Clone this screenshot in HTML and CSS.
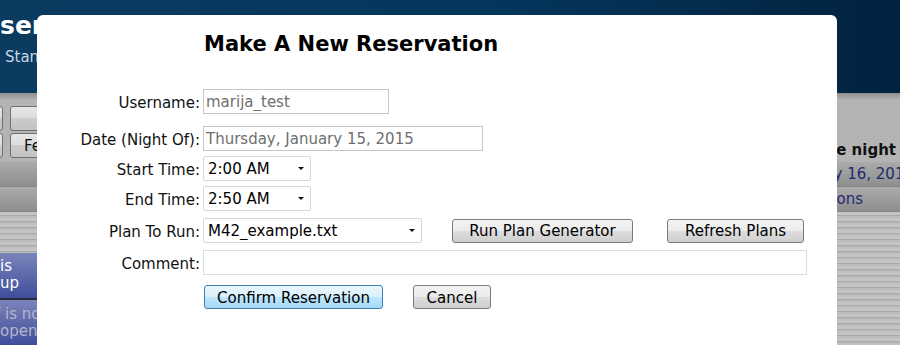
FILE: index.html
```html
<!DOCTYPE html>
<html lang="en">
<head>
    <meta charset="UTF-8">
    <meta name="viewport" content="width=device-width, initial-scale=1.0">
    <title>Make A New Reservation</title>
    <link rel="stylesheet" href="styles.css">
</head>

<body>
    <div class="page">
        <header class="site-header">
            <h1 class="site-title">servations</h1>
            <p class="site-sub">Stanford</p>
        </header>
        <main class="page-main">
            <aside class="side-left">
                <div class="side-top">
                    <div class="tool-row">
                        <button class="tool tool-cut"></button>
                        <button class="tool"></button>
                    </div>
                    <div class="tool-row">
                        <button class="tool tool-cut"></button>
                        <button class="tool">Fetch</button>
                    </div>
                </div>
                <div class="bar"></div>
                <div class="bar"></div>
                <div class="stripes stripes-short"></div>
                <div class="notice">is<br>up</div>
                <div class="notice notice-muted">f is not<br>open</div>
            </aside>
            <div class="center"></div>
            <aside class="side-right">
                <div class="side-top side-top-right">
                    <h2 class="night-title">the night</h2>
                </div>
                <div class="bar bar-text"><span class="night-date">January 16, 2015</span></div>
                <div class="bar bar-text"><span class="night-link">Reservations</span></div>
                <div class="stripes"></div>
            </aside>
        </main>
    </div>

    <div class="modal">
        <h2 class="modal-title">Make A New Reservation</h2>
        <form class="res-form">
            <div class="row row-first">
                <label class="row-label" for="username">Username:</label>
                <input type="text" id="username" class="field field-user" value="marija_test" disabled>
            </div>
            <div class="row row-gap-lg">
                <label class="row-label" for="night">Date (Night Of):</label>
                <input type="text" id="night" class="field field-date" value="Thursday, January 15, 2015" disabled>
            </div>
            <div class="row">
                <label class="row-label" for="start">Start Time:</label>
                <span class="select-wrap select-time">
                    <select id="start" class="select">
                        <option>2:00 AM</option>
                    </select>
                </span>
            </div>
            <div class="row">
                <label class="row-label" for="end">End Time:</label>
                <span class="select-wrap select-time">
                    <select id="end" class="select">
                        <option>2:50 AM</option>
                    </select>
                </span>
            </div>
            <div class="row row-gap-md">
                <label class="row-label" for="plan">Plan To Run:</label>
                <span class="select-wrap select-plan">
                    <select id="plan" class="select">
                        <option>M42_example.txt</option>
                    </select>
                </span>
                <button type="button" class="btn btn-generator">Run Plan Generator</button>
                <button type="button" class="btn btn-refresh">Refresh Plans</button>
            </div>
            <div class="row row-gap-md">
                <label class="row-label" for="comment">Comment:</label>
                <input type="text" id="comment" class="field field-comment">
            </div>
            <div class="row row-actions">
                <span class="row-label"></span>
                <button type="button" class="btn btn-confirm">Confirm Reservation</button>
                <button type="button" class="btn btn-cancel">Cancel</button>
            </div>
        </form>
    </div>
</body>
</html>
```

FILE: styles.css
```css
/* General Reset */
* {
    margin: 0;
    padding: 0;
    box-sizing: border-box;
}

body {
    font-family: "DejaVu Sans", Verdana, sans-serif;
    background-color: #b4b4b4;
    color: #111;
    width: 900px;
    height: 345px;
    overflow: hidden;
}

/* Background page */
.site-header {
    height: 93px;
    background: linear-gradient(to right, #0c3b60, #04365c 55%, #01223f);
    color: #fff;
    padding-top: 11px;
}

.site-title {
    font-size: 25px;
    font-weight: bold;
    line-height: 30px;
    white-space: nowrap;
}

.site-sub {
    font-size: 15px;
    line-height: 18px;
    margin-top: 7px;
    padding-left: 5px;
    color: #c9d5e2;
}

.page-main {
    display: grid;
    grid-template-columns: 200px 1fr 260px;
    height: 252px;
    background: linear-gradient(#8f8f8f, #b4b4b4 7px);
}

.side-left,
.side-right {
    display: flex;
    flex-direction: column;
    overflow: hidden;
}

.side-top {
    height: 69px;
    padding-top: 13px;
    display: flex;
    flex-direction: column;
    gap: 2px;
}

.tool-row {
    display: flex;
    gap: 7px;
}

.tool {
    width: 80px;
    height: 25px;
    border: 1px solid #707070;
    border-radius: 3px;
    background: linear-gradient(#e6e6e6, #dcdcdc 50%, #cbcbcb 50%, #c2c2c2);
    font-family: "DejaVu Sans", sans-serif;
    font-size: 15px;
    text-align: left;
    padding-left: 13px;
    color: #111;
}

.tool-cut {
    width: 60px;
    margin-left: -57px;
}

.bar {
    height: 25px;
    background: linear-gradient(#ababab, #8e8e8e);
    border-bottom: 1px solid #858585;
}

.stripes {
    flex: 1;
    background: repeating-linear-gradient(to bottom, #c4c4c4 0 3px, #a9a9a9 3px 4px, #bcbcbc 4px 6px);
}

.stripes-short {
    flex: none;
    height: 41px;
}

.notice {
    height: 47px;
    padding-top: 5px;
    font-size: 15px;
    line-height: 17px;
    color: #fff;
    background: linear-gradient(#7b84ba, #3f4d9c);
    border-bottom: 2px solid #2a2a3a;
    white-space: nowrap;
}

.notice-muted {
    height: auto;
    flex: 1;
    padding-top: 6px;
    color: #b3b6cc;
    border-bottom: none;
    text-indent: -5px;
}

.side-top-right {
    justify-content: flex-end;
    padding-bottom: 2px;
}

.night-title {
    font-size: 15px;
    line-height: 20px;
    text-align: right;
    padding-right: 4px;
    white-space: nowrap;
}

.bar-text {
    display: flex;
    justify-content: flex-end;
    align-items: center;
    font-size: 15px;
    color: #1f2a6e;
    white-space: nowrap;
}

.night-date {
    margin-right: -14px;
}

.night-link {
    margin-right: 37px;
}

/* Reservation dialog */
.modal {
    position: absolute;
    left: 37px;
    top: 15px;
    width: 800px;
    height: 345px;
    background-color: #fff;
    border-radius: 6px 6px 0 0;
    padding-top: 17px;
}

.modal-title {
    font-size: 21px;
    font-weight: bold;
    line-height: 24px;
    margin-left: 167px;
    color: #000;
}

.res-form {
    display: flex;
    flex-direction: column;
    gap: 5px;
}

.row {
    display: flex;
    align-items: center;
    gap: 3px;
    height: 25px;
}

.row-first {
    margin-top: 33px;
}

.row-gap-lg {
    margin-top: 7px;
}

.row-gap-md {
    margin-top: 2px;
}

.row-actions {
    margin-top: 5px;
    height: 24px;
}

.row-label {
    width: 163px;
    flex: none;
    text-align: right;
    font-size: 15px;
    padding-top: 2px;
    color: #111;
}

.field {
    height: 25px;
    border: 1px solid #c6c6c6;
    font-family: "DejaVu Sans", sans-serif;
    font-size: 15px;
    padding: 1px 2px 0;
    color: #6e6e6e;
    background-color: #fff;
}

.field-user {
    width: 186px;
}

.field-date {
    width: 280px;
}

.field-comment {
    width: 604px;
    border-color: #dcdcdc;
}

.select-wrap {
    position: relative;
    display: block;
    height: 25px;
}

.select-wrap::after {
    content: "";
    position: absolute;
    top: 11px;
    border-left: 3px solid transparent;
    border-right: 3px solid transparent;
    border-top: 3px solid #111;
}

.select-time {
    width: 108px;
}

.select-time::after {
    left: 95px;
}

.select-plan {
    width: 219px;
}

.select-plan::after {
    left: 206px;
}

.select {
    appearance: none;
    -webkit-appearance: none;
    width: 100%;
    height: 25px;
    border: 1px solid #d6d6d6;
    border-radius: 2px;
    background-color: #fff;
    font-family: "DejaVu Sans", sans-serif;
    font-size: 15px;
    padding: 1px 0 0 4px;
    color: #000;
}

.btn {
    height: 24px;
    border: 1px solid #7a7a7a;
    border-radius: 3px;
    background: linear-gradient(#f3f3f3, #ebebeb 50%, #dddddd 50%, #cfcfcf);
    font-family: "DejaVu Sans", sans-serif;
    font-size: 15px;
    color: #000;
    text-align: center;
    padding-top: 1px;
}

.btn-generator {
    width: 181px;
    margin-left: 27px;
}

.btn-refresh {
    width: 137px;
    margin-left: 31px;
}

.btn-confirm {
    width: 179px;
    margin-left: 1px;
    border-color: #3c7fb1;
    background: linear-gradient(#eaf6fd, #d9f0fc 50%, #bee6fd 50%, #a7d9f5);
}

.btn-cancel {
    width: 78px;
    margin-left: 27px;
}
```
